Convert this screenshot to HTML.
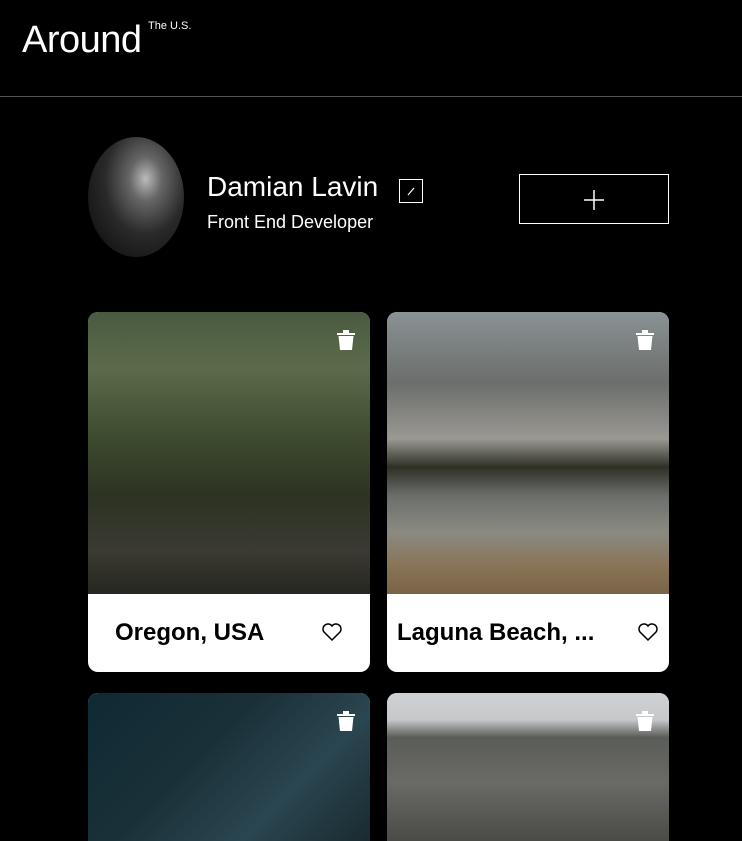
<!DOCTYPE html>
<html><head><style>
*{margin:0;padding:0;box-sizing:border-box}
html,body{width:742px;height:841px;overflow:hidden}
body{background:#000;font-family:"Liberation Sans",sans-serif;color:#fff;position:relative}
.hdr{position:absolute;left:0;top:0;width:742px;height:97px;border-bottom:1px solid #545454}
.logo{position:absolute;left:22px;top:19px;font-size:38px;letter-spacing:-0.5px}
.sup{position:absolute;left:148px;top:20px;font-size:11px}
.av{position:absolute;left:88px;top:137px;width:96px;height:120px;border-radius:50%;background:radial-gradient(ellipse at 60% 35%,#bbb 0%,#666 20%,#2a2a2a 50%,#151515 80%)}
.name{position:absolute;left:207px;top:171px;font-size:28px}
.job{position:absolute;left:207px;top:212px;font-size:18px}
.edit{position:absolute;left:399px;top:179px;width:24px;height:24px;border:1px solid #fff}
.add{position:absolute;left:519px;top:174px;width:150px;height:50px;border:1px solid #fff}
.card{position:absolute;width:282px;border-radius:10px;overflow:hidden;background:#fff}
.img{height:282px;position:relative}
.foot{height:78px;color:#000;font-weight:bold;font-size:24px;position:relative}
.foot span{position:absolute;top:25px}
.heart{position:absolute;right:27px;top:28px}
.trash{position:absolute;right:14px;top:17px}
</style></head><body>
<div class="hdr"><div class="logo">Around</div><div class="sup">The U.S.</div></div>
<div class="av"></div>
<div class="name">Damian Lavin</div>
<div class="job">Front End Developer</div>
<div class="edit"><svg width="22" height="22"><line x1="8" y1="15" x2="14" y2="8" stroke="#fff" stroke-width="1.2"/></svg></div>
<div class="add"><svg width="148" height="48"><path d="M74 15V35M64 25H84" stroke="#fff" stroke-width="1.5"/></svg></div>

<div class="card" style="left:88px;top:312px;height:360px">
<div class="img" style="background:linear-gradient(180deg,#4a5a40 0%,#5b6b4a 20%,#3d4a2e 45%,#2c3322 65%,#3a3a32 85%,#262620 100%)"><svg class="trash" width="20" height="22"><path d="M1 4H19V6H1ZM7 4V1H13V4M2.5 7H17.5L16 21H4Z" fill="#fff"/></svg></div>
<div class="foot"><span style="left:27px">Oregon, USA</span><svg class="heart" width="22" height="20"><path d="M11 18L3 10A5 5 0 0 1 11 4A5 5 0 0 1 19 10Z" fill="none" stroke="#000" stroke-width="1.5"/></svg></div></div>

<div class="card" style="left:387px;top:312px;height:360px">
<div class="img" style="background:linear-gradient(180deg,#8a9294 0%,#6b6e6c 25%,#9a9892 45%,#2e3026 55%,#6a6e6a 65%,#8b8a82 78%,#8a7458 90%,#7a6448 100%)"><svg class="trash" width="20" height="22"><path d="M1 4H19V6H1ZM7 4V1H13V4M2.5 7H17.5L16 21H4Z" fill="#fff"/></svg></div>
<div class="foot"><span style="left:10px">Laguna Beach, ...</span><svg class="heart" style="right:10px" width="22" height="20"><path d="M11 18L3 10A5 5 0 0 1 11 4A5 5 0 0 1 19 10Z" fill="none" stroke="#000" stroke-width="1.5"/></svg></div></div>

<div class="card" style="left:88px;top:693px;height:148px;border-radius:10px 10px 0 0">
<div class="img" style="height:148px;background:linear-gradient(135deg,#0e2a33 0%,#1a3038 40%,#2a4650 70%,#1a2a30 100%)"><svg class="trash" width="20" height="22"><path d="M1 4H19V6H1ZM7 4V1H13V4M2.5 7H17.5L16 21H4Z" fill="#fff"/></svg></div></div>

<div class="card" style="left:387px;top:693px;height:148px;border-radius:10px 10px 0 0">
<div class="img" style="height:148px;background:linear-gradient(180deg,#cfd2d4 0%,#c6c8ca 18%,#5a5c58 30%,#6a6a66 60%,#4a4a46 100%)"><svg class="trash" width="20" height="22"><path d="M1 4H19V6H1ZM7 4V1H13V4M2.5 7H17.5L16 21H4Z" fill="#fff"/></svg></div></div>
</body></html>
